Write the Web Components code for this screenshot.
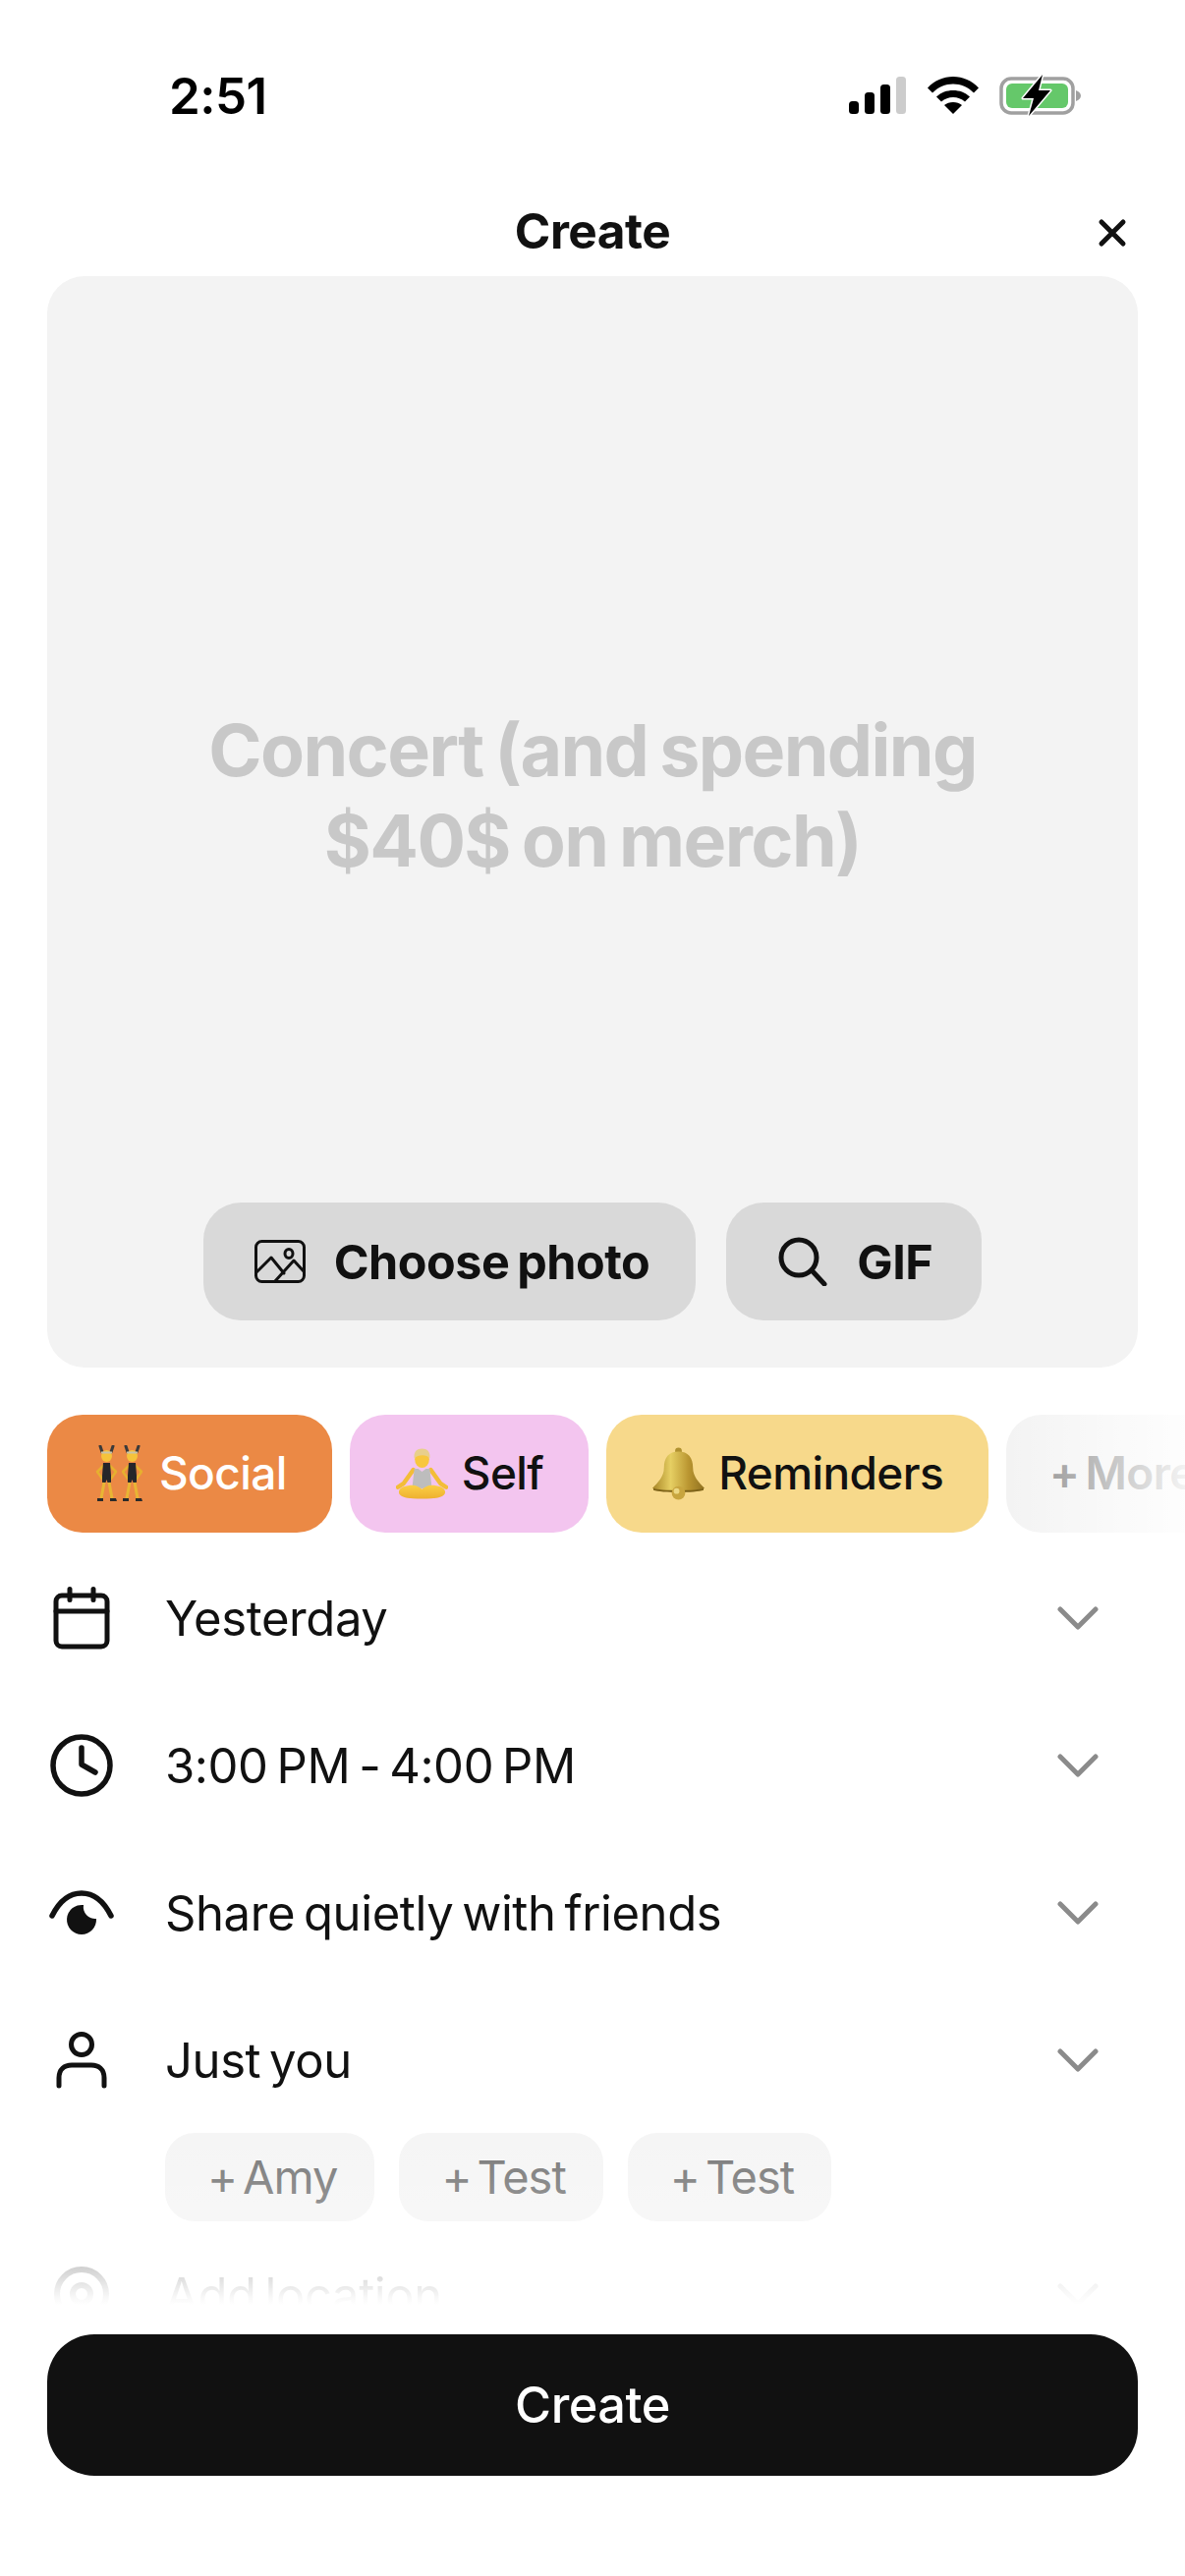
<!DOCTYPE html>
<html lang="en"><head><meta charset="utf-8"><title>Create</title>
<style>html,body{margin:0;padding:0;background:#fff}body{font-family:Inter,"Liberation Sans",sans-serif;color:#111}</style>
</head><body>
<app-screen>
  <status-bar slot="top"></status-bar>
  <top-title slot="top">Create</top-title>
  <hero-card slot="top" text1="Concert (and spending" text2="$40$ on merch)">
    <pill-button icon="photo">Choose photo</pill-button>
    <pill-button icon="search" compact>GIF</pill-button>
  </hero-card>
  <tag-row slot="top">
    <tag-chip emoji="dancers" bg="#eb8945" fg="#fff">Social</tag-chip>
    <tag-chip emoji="lotus" bg="#f3c5ef" fg="#111">Self</tag-chip>
    <tag-chip emoji="bell" bg="#f7d98b" fg="#111">Reminders</tag-chip>
    <tag-chip bg="#f3f3f3" fg="#858585" more>+ More</tag-chip>
  </tag-row>
  <detail-row icon="calendar">Yesterday</detail-row>
  <detail-row icon="clock">3:00 PM - 4:00 PM</detail-row>
  <detail-row icon="eye">Share quietly with friends</detail-row>
  <detail-row icon="person">Just you</detail-row>
  <people-row>
    <person-chip>Amy</person-chip><person-chip>Test</person-chip><person-chip>Test</person-chip>
  </people-row>
  <detail-row icon="pin" class="loc">Add location</detail-row>
  <primary-button slot="cta">Create</primary-button>
</app-screen>
<script>
const ICONS={
 photo:'<svg width="52" height="44" viewBox="0 0 52 44" fill="none" stroke="#111" stroke-width="3" stroke-linejoin="round" stroke-linecap="round"><rect x="1.500" y="1.500" width="49" height="41" rx="6"/><ellipse cx="35" cy="14" rx="4" ry="4.500"/><path d="M2 33 17 18l13 16M21 42l19-21 10 11"/></svg>',
 search:'<svg width="50" height="50" viewBox="0 0 50 50" fill="none" stroke="#111" stroke-width="5" stroke-linecap="round"><circle cx="21" cy="21" r="18"/><path d="m34 34 13 14"/></svg>',
 calendar:'<svg width="58" height="64" viewBox="0 0 58 64" fill="none" stroke="#111" stroke-width="5" stroke-linecap="round" stroke-linejoin="round"><rect x="3" y="9" width="52" height="52" rx="6"/><path d="M3 25h52M17 2.500v11M41 2.500v11"/></svg>',
 clock:'<svg width="64" height="64" viewBox="0 0 64 64" fill="none" stroke="#111" stroke-width="5.500" stroke-linecap="round" stroke-linejoin="round"><circle cx="32" cy="32" r="29"/><path d="M32 14v17l14 8"/></svg>',
 eye:'<svg width="66" height="46" viewBox="0 0 66 46" fill="none"><path d="M3 26C11 10 21 3 33 3s22 7 30 23" stroke="#111" stroke-width="5.500" stroke-linecap="round"/><path d="M35 15.100A15 15 0 1 0 48 29A12 12 0 0 1 35 15.100z" fill="#111"/></svg>',
 person:'<svg width="52" height="58" viewBox="0 0 52 58" fill="none" stroke="#111" stroke-width="5" stroke-linecap="round"><circle cx="26" cy="13" r="10.500"/><path d="M3 55V47c0-9 6-13 13-13h20c7 0 13 4 13 13v8"/></svg>',
 pin:'<svg width="56" height="64" viewBox="0 0 56 64" fill="none" stroke="#111" stroke-width="6"><circle cx="28" cy="31" r="25"/><circle cx="28" cy="31" r="9"/></svg>',
 chevron:'<svg width="42" height="26" viewBox="0 0 42 26" fill="none" stroke="#8b8b8b" stroke-width="5" stroke-linecap="round" stroke-linejoin="round"><path d="M3 4l18 18L39 4"/></svg>'
};
const dancer=(x)=>`<g transform="translate(${x} 0)"><path d="M8 7 6 1M17 7l2-6" stroke="#3b3a3a" stroke-width="3" stroke-linecap="round"/><ellipse cx="12.500" cy="11" rx="5.500" ry="6" fill="#f5c33b"/><path d="M7 7.500h11" stroke="#c9c3a8" stroke-width="2"/><path d="M9 21 3 27l5 7M16 21l6 6-5 7" fill="none" stroke="#e6b02f" stroke-width="2.500" stroke-linecap="round" stroke-linejoin="round"/><path d="M9 18h7l1 13v7h-3.500l-1-3-1 3H8v-7z" fill="#26262a"/><path d="M10 38 7 54M15 38l3 16" stroke="#e8b534" stroke-width="3"/><path d="M3 54h6v3H3zM16 54h6l1 3h-7z" fill="#2a2a2a"/></g>`;
const EMOJI={
 dancers:`<svg width="52" height="58" viewBox="0 0 52 58">${dancer(0)}${dancer(26)}</svg>`,
 lotus:`<svg width="54" height="52" viewBox="0 0 54 52"><defs><linearGradient id="lg" x1="0" y1="0" x2="0" y2="1"><stop offset="0" stop-color="#fbcf45"/><stop offset="1" stop-color="#eeb02f"/></linearGradient></defs><path d="M18 22 8 36l-6 4M36 22l10 14 6 4" fill="none" stroke="#f3bd38" stroke-width="4.500" stroke-linecap="round" stroke-linejoin="round"/><path d="M19 21h4l4 3 4-3h4l2 18c-4 3-16 3-20 0z" fill="#bdbdbd"/><path d="M3 45c0-5 8-7 14-7 4 0 7 2 10 4 3-2 6-4 10-4 6 0 14 2 14 7 0 6-12 7-24 7S3 51 3 45z" fill="url(#lg)"/><ellipse cx="27" cy="11" rx="7.500" ry="9" fill="#f8c73e"/><path d="M19 10C18 3 22 0 27 0s9 3 8 10c-3-4-12-4-16 0z" fill="#e8cf8c"/></svg>`,
 bell:`<svg width="54" height="54" viewBox="0 0 54 54"><defs><linearGradient id="bg" x1="0" y1="0" x2="1" y2="0"><stop offset="0" stop-color="#a88525"/><stop offset=".35" stop-color="#e6cf63"/><stop offset=".7" stop-color="#b99530"/><stop offset="1" stop-color="#8f7020"/></linearGradient></defs><circle cx="27" cy="3.500" r="3.500" fill="#b0912f"/><path d="M27 4c10 0 15 6 15 17 0 9 6 15 12 21-6 4-48 4-54 0 6-6 12-12 12-21C12 10 17 4 27 4z" fill="url(#bg)"/><path d="M1 42c6 3 46 3 52 0v2c-8 3-44 3-52 0z" fill="#7d6218"/><circle cx="27" cy="47" r="7" fill="#c8a53e"/><circle cx="25" cy="45" r="3" fill="#ecd883"/></svg>`
};
function def(name,css,html,extra){
  customElements.define(name,class extends HTMLElement{
    constructor(){super();this.attachShadow({mode:'open'});}
    connectedCallback(){this.shadowRoot.innerHTML=`<style>${css}</style>`+(typeof html==='function'?html(this):html);if(extra)extra(this);}
  });
}
def('app-screen',`:host{display:block;position:relative;width:1206px;height:2622px;overflow:hidden;background:#fff}
 .cta{position:absolute;left:48px;right:48px;top:2376px;z-index:2}
 .fade{position:absolute;left:0;right:0;top:2170px;height:452px;z-index:1;pointer-events:none;background:linear-gradient(rgba(255,255,255,0) 0,rgba(255,255,255,.25) 92px,rgba(255,255,255,.78) 133px,rgba(255,255,255,.97) 168px,#fff 176px)}`,
 `<slot name="top"></slot><slot></slot><div class="fade"></div><div class="cta"><slot name="cta"></slot></div>`);
def('status-bar',`:host{display:flex;justify-content:space-between;align-items:flex-start;height:189px;box-sizing:border-box;padding:70px 105px 0 172px}
 .t{font:600 51px/56px Inter,sans-serif;color:#000;letter-spacing:-.5px}
 .i{display:flex;align-items:flex-start;margin-top:8px;gap:21px}`,
 `<span class="t">2:51</span><span class="i">
 <svg width="59" height="38" viewBox="0 0 59 38"><rect x="0" y="25" width="10" height="13" rx="3.500"/><rect x="16" y="16" width="10" height="22" rx="3.500"/><rect x="32" y="8" width="10" height="30" rx="3.500"/><rect x="48" y="0" width="10" height="38" rx="3.500" fill="#ccc"/></svg>
 <svg width="52" height="38" viewBox="0 0 52 38"><path d="M0 11.500C7 4 16 0 26 0s19 4 26 11.500l-5 5C41 10.500 34 7.500 26 7.500S11 10.500 5 16.500z"/><path d="M9 20.500c5-4.500 10.500-6.500 17-6.500s12 2 17 6.500l-5 5c-3.500-3-7.500-4.500-12-4.500s-8.500 1.500-12 4.500z"/><path d="M17 29c2.500-2 5.500-3 9-3s6.500 1 9 3l-9 9z"/></svg>
 <svg width="84" height="42" viewBox="0 0 84 42" style="margin-top:-2px"><rect x="2" y="4" width="73" height="35" rx="10" fill="none" stroke="#a0a0a0" stroke-width="3.500"/><rect x="7" y="9" width="63" height="25" rx="6" fill="#65c86a"/><path d="M78 16c3 1 5 3 5 5.500S81 26 78 27z" fill="#a0a0a0"/><path d="M44 0 24 24h11l-5 18 22-26H40z" fill="#000" stroke="#fff" stroke-width="3" paint-order="stroke" stroke-linejoin="round"/></svg></span>`);
def('top-title',`:host{display:flex;position:relative;align-items:center;justify-content:center;height:92px;font:700 49.500px/56px Inter,sans-serif;letter-spacing:-.5px;color:#111}
 svg{position:absolute;right:59px;top:33px}`,
 `<slot></slot><svg width="30" height="30" viewBox="0 0 30 30" fill="none" stroke="#111" stroke-width="5" stroke-linecap="round"><path d="M4 4l22 22M26 4 4 26"/></svg>`);
def('hero-card',`:host{display:flex;flex-direction:column;align-items:center;box-sizing:border-box;margin:0 48px;height:1111px;background:#f3f3f3;border-radius:38px;padding:0 0 48px}
 .txt{flex:1;display:flex;flex-direction:column;justify-content:center;align-items:center;padding-top:114px;font:700 73.500px/92px Inter,sans-serif;letter-spacing:-1.6px;word-spacing:-4px;color:#c8c8c8}
 .btns{display:flex;gap:31px}`,
 el=>`<div class="txt"><span>${el.getAttribute('text1')}</span><span>${el.getAttribute('text2')}</span></div><div class="btns"><slot></slot></div>`);
def('pill-button',`:host{display:flex;align-items:center;box-sizing:border-box;height:120px;padding:0 47px 0 52px;gap:29px;background:#d9d9d9;border-radius:38px;font:700 48.500px/58px Inter,sans-serif;letter-spacing:-.5px;word-spacing:-3px;color:#111;white-space:nowrap}
 :host([compact]){padding:0 50px 0 53px;gap:30px}svg{display:block}
 span{padding-top:2px}`,
 el=>`${ICONS[el.getAttribute('icon')]}<span><slot></slot></span>`);
def('tag-row',`:host{display:flex;gap:18px;margin:48px 0 0 48px;height:120px;position:relative;overflow:hidden}`,`<slot></slot>`);
def('tag-chip',`:host{display:flex;flex:none;align-items:center;box-sizing:border-box;height:120px;padding:0 46px 0 47px;gap:14px;border-radius:36px;font:500 46px/56px Inter,sans-serif;letter-spacing:-.6px;white-space:nowrap;position:relative}
 :host([more]){padding:0 40px 0 44px;width:240px;font-weight:600;word-spacing:-5px}
 .t{position:relative;top:-1px}
 .e{display:flex;align-items:center;justify-content:center;width:53px;height:60px}
 .f{position:absolute;inset:0;border-radius:inherit;background:linear-gradient(90deg,rgba(255,255,255,0),rgba(255,255,255,.3) 25%,rgba(255,255,255,.95) 80%,#fff)}`,
 el=>{const e=el.getAttribute('emoji');el.style.background=el.getAttribute('bg');el.style.color=el.getAttribute('fg');return (e?`<span class="e">${EMOJI[e]}</span>`:'')+'<span class="t"><slot></slot></span>'+(e?'':'<span class="f"></span>')});
def('detail-row',`:host{display:grid;grid-template-columns:120px 1fr 42px;align-items:center;height:150px;margin:0 88px 0 48px;font:400 49px/56px Inter,sans-serif;letter-spacing:-.4px;word-spacing:-4.500px;color:#111;position:relative;top:12px}
 .ic{display:flex;align-items:center;justify-content:center;width:72px;margin-left:-1px}svg{display:block}
 .l{padding-top:2px}`,
 el=>`<span class="ic">${ICONS[el.getAttribute('icon')]}</span><span class="l"><slot></slot></span>${ICONS.chevron}`);
def('people-row',`:host{display:flex;gap:25px;margin:11px 0 -12px 168px;height:90px;position:relative}`,`<slot></slot>`);
def('person-chip',`:host{display:flex;align-items:center;box-sizing:border-box;height:90px;padding:0 38px 0 43px;gap:6px;background:#f5f5f5;border-radius:30px;font:400 47px/56px Inter,sans-serif;letter-spacing:-1px;color:#777}`,
 `<span>+</span><slot></slot>`);
def('primary-button',`:host{display:flex;align-items:center;justify-content:center;height:144px;background:#111;border-radius:48px;color:#fff;font:500 50.500px/56px Inter,sans-serif;letter-spacing:-.5px}`,`<slot></slot>`);
</script>
</body></html>
